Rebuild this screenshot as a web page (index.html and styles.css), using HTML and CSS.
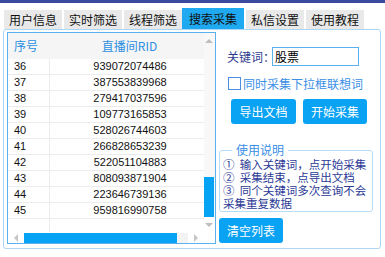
FILE: index.html
```html
<!DOCTYPE html>
<html lang="zh-CN">
<head>
    <meta charset="UTF-8">
    <meta name="viewport" content="width=device-width, initial-scale=1.0">
    <title>搜索采集</title>
    <link rel="stylesheet" href="styles.css">
</head>
<body>
    <div class="topbar"></div>
    <div class="tabs">
        <div class="tab">用户信息</div>
        <div class="tab">实时筛选</div>
        <div class="tab">线程筛选</div>
        <div class="tab active">搜索采集</div>
        <div class="tab">私信设置</div>
        <div class="tab">使用教程</div>
    </div>
    <div class="panel">
        <div class="listbox">
            <div class="list-view">
                <div class="list-head">
                    <div class="col-no">序号</div>
                    <div class="col-rid">直播间RID</div>
                </div>
                <div class="row"><div class="col-no">36</div><div class="col-rid">939072074486</div></div>
                <div class="row"><div class="col-no">37</div><div class="col-rid">387553839968</div></div>
                <div class="row"><div class="col-no">38</div><div class="col-rid">279417037596</div></div>
                <div class="row"><div class="col-no">39</div><div class="col-rid">109773165853</div></div>
                <div class="row"><div class="col-no">40</div><div class="col-rid">528026744603</div></div>
                <div class="row"><div class="col-no">41</div><div class="col-rid">266828653239</div></div>
                <div class="row"><div class="col-no">42</div><div class="col-rid">522051104883</div></div>
                <div class="row"><div class="col-no">43</div><div class="col-rid">808093871904</div></div>
                <div class="row"><div class="col-no">44</div><div class="col-rid">223646739136</div></div>
                <div class="row"><div class="col-no">45</div><div class="col-rid">959816990758</div></div>
                <div class="row filler"><div class="col-no"></div><div class="col-rid"></div></div>
            </div>
            <div class="vscroll">
                <div class="arrow-box"><span class="arrow up"></span></div>
                <div class="vtrack"><div class="vthumb"></div></div>
                <div class="arrow-box down-box"><span class="arrow down"></span></div>
            </div>
            <div class="hscroll">
                <div class="harrow-box"><span class="arrow left"></span></div>
                <div class="htrack"><div class="hthumb"></div></div>
                <div class="harrow-box"><span class="arrow right"></span></div>
            </div>
            <div class="corner"></div>
        </div>

        <div class="side">
            <div class="keyword-row">
                <label class="kw-label" for="kw">关键词：</label>
                <input class="kw-input" id="kw" type="text" value="股票">
            </div>
            <div class="check-row">
                <span class="checkbox"></span>
                <span class="check-text">同时采集下拉框联想词</span>
            </div>
            <div class="btn-row">
                <button class="btn btn-export">导出文档</button>
                <button class="btn btn-start">开始采集</button>
            </div>
            <fieldset class="help">
                <legend>使用说明</legend>
                <div class="help-line">① &nbsp;输入关键词，点开始采集</div>
                <div class="help-line">② &nbsp;采集结束，点导出文档</div>
                <div class="help-line">③ &nbsp;同个关键词多次查询不会</div>
                <div class="help-line">采集重复数据</div>
            </fieldset>
            <button class="btn btn-clear">清空列表</button>
        </div>
    </div>
</body>
</html>
```

FILE: styles.css
```css
body {
    margin: 0;
    background: #fff;
    font-family: "Noto Sans CJK SC", "Liberation Sans", sans-serif;
    font-size: 12px;
    color: #111;
}
.topbar {
    height: 3px;
    background: #3b4a9e;
}
.tabs {
    display: flex;
    align-items: flex-end;
    gap: 2px;
    height: 26px;
    padding-left: 4px;
    box-sizing: border-box;
}
.tab {
    height: 19px;
    line-height: 19px;
    padding: 0 5px;
    background: #e9e9e9;
    white-space: nowrap;
}
.tab.active {
    height: 21px;
    line-height: 21px;
    padding: 0 7px;
    margin-left: -2px;
    background: #1fa9f1;
}
.panel {
    display: flex;
    margin-left: 3px;
    width: 378px;
    height: 220px;
    box-sizing: border-box;
    border: 1px solid #add6f5;
    border-radius: 3px;
    padding: 2px 0 0 3px;
}

/* list */
.listbox {
    width: 209px;
    height: 212px;
    box-sizing: border-box;
    border: 1px solid #5ab1ef;
    display: grid;
    grid-template-columns: 196px 11px;
    grid-template-rows: 199px 11px;
}
.list-view {
    display: flex;
    flex-direction: column;
    overflow: hidden;
}
.list-head, .row {
    display: grid;
    grid-template-columns: 41px 1fr;
}
.list-head {
    height: 26px;
    line-height: 26px;
    background: #f5f5f5;
    color: #2b8fe2;
}
.row {
    height: 16px;
    box-sizing: border-box;
    border-bottom: 1px solid #ececec;
    line-height: 15px;
    font-family: "Liberation Sans", sans-serif;
    font-size: 11px;
    color: #111;
}
.row .col-rid {
    border-left: 1px solid #ececec;
}
.row.filler {
    flex: 1;
    border-bottom: none;
}
.col-no {
    padding-left: 6px;
}
.col-rid {
    text-align: center;
    padding-left: 6px;
}

/* scrollbars */
.vscroll {
    display: flex;
    flex-direction: column;
    background: #f8f8f8;
}
.arrow-box {
    height: 16px;
    display: flex;
    align-items: center;
    justify-content: center;
    padding-right: 1px;
}
.down-box {
    height: 15px;
    background: #fff;
}
.vtrack {
    flex: 1;
    display: flex;
    flex-direction: column;
    justify-content: flex-end;
}
.vthumb {
    height: 40px;
    width: 10px;
    background: #06a2f4;
}
.hscroll {
    display: flex;
    align-items: flex-end;
}
.harrow-box {
    width: 16px;
    height: 10px;
    display: flex;
    align-items: center;
    justify-content: center;
}
.htrack {
    flex: 1;
    height: 10px;
    background: #f3f3f3;
}
.hthumb {
    width: 153px;
    height: 10px;
    background: #06a2f4;
}
.corner {
    background: #fff;
}
.arrow {
    width: 0;
    height: 0;
    border: 4px solid transparent;
}
.arrow.up {
    border-bottom-color: #bdbdbd;
    border-top-width: 0;
}
.arrow.down {
    border-top-color: #bdbdbd;
    border-bottom-width: 0;
}
.arrow.left {
    border-right-color: #c6c6c6;
    border-left-width: 0;
}
.arrow.right {
    border-left-color: #c6c6c6;
    border-right-width: 0;
}

/* side panel */
.side {
    margin-left: 3px;
    width: 158px;
    display: flex;
    flex-direction: column;
}
.keyword-row {
    display: flex;
    align-items: center;
    margin-top: 15px;
}
.kw-label {
    width: 53px;
    padding-left: 8px;
    box-sizing: border-box;
    color: #2d3b8f;
    white-space: nowrap;
}
.kw-input {
    width: 87px;
    height: 19px;
    box-sizing: border-box;
    border: 1px solid #5ab1ef;
    padding: 0 2px;
    font-family: "Noto Sans CJK SC", sans-serif;
    font-size: 12px;
    color: #000;
    outline: none;
}
.check-row {
    display: flex;
    align-items: center;
    margin-top: 11px;
    padding-left: 9px;
    height: 13px;
}
.checkbox {
    width: 13px;
    height: 13px;
    box-sizing: border-box;
    border: 1px solid #4c8fe0;
    background: #fff;
}
.check-text {
    margin-left: 2px;
    color: #3a8ee6;
    line-height: 13px;
    white-space: nowrap;
}
.btn-row {
    display: flex;
    gap: 7px;
    margin-top: 9px;
    padding-left: 12px;
}
.btn {
    height: 25px;
    border: none;
    border-radius: 3px;
    background: #0aa2f3;
    color: #fff;
    font-family: "Noto Sans CJK SC", sans-serif;
    font-size: 12px;
    padding: 0;
}
.btn-export {
    width: 65px;
}
.btn-start {
    width: 64px;
}
.help {
    margin: 19px 4px 0 0;
    padding: 1px 0 0 3px;
    height: 69px;
    box-sizing: border-box;
    border: 1px solid #b9ddf6;
    border-radius: 3px;
}
.help legend {
    margin-left: 9px;
    padding: 0 4px;
    color: #3a8ee6;
    line-height: 14px;
}
.help-line {
    color: #2c3a96;
    line-height: 13px;
    height: 13px;
    font-size: 11.5px;
    white-space: nowrap;
}
.btn-clear {
    width: 64px;
    margin-top: 6px;
}
```
